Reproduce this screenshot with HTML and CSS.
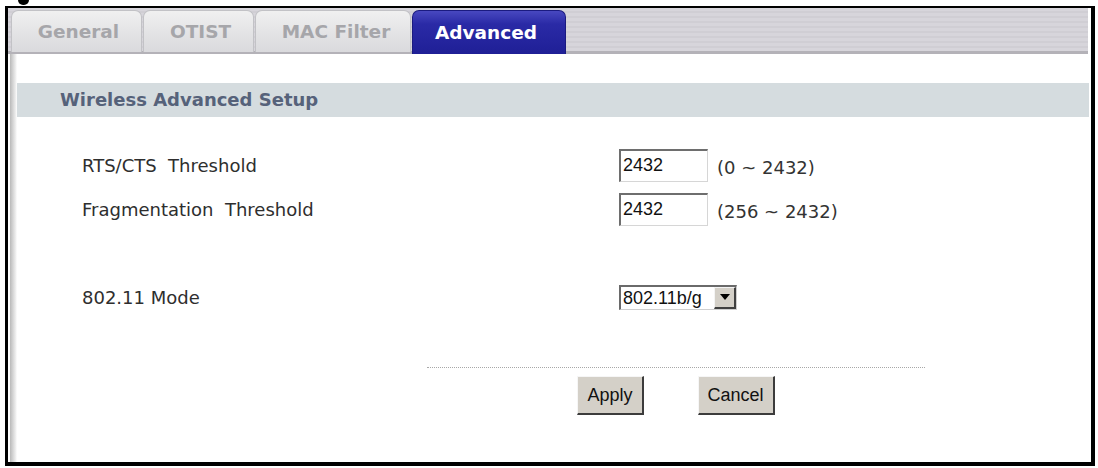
FILE: index.html
```html
<!DOCTYPE html>
<html>
<head>
<meta charset="utf-8">
<title>Wireless Advanced Setup</title>
<link rel="stylesheet" href="styles.css">
</head>
<body>
<div class="stub-row"><span class="stub"></span></div>
<div class="frame">
  <div class="tabbar">
    <div class="tab tab-general">General</div>
    <div class="tab tab-otist">OTIST</div>
    <div class="tab tab-mac">MAC Filter</div>
    <div class="tab tab-adv active">Advanced</div>
  </div>
  <div class="content">
    <div class="section-head">Wireless Advanced Setup</div>
    <div class="rows">
      <div class="row">
        <div class="label">RTS/CTS&nbsp; Threshold</div>
        <div class="field"><input class="num" type="text" value="2432"><span class="range">(0 ~ 2432)</span></div>
      </div>
      <div class="row">
        <div class="label">Fragmentation&nbsp; Threshold</div>
        <div class="field"><input class="num" type="text" value="2432"><span class="range">(256 ~ 2432)</span></div>
      </div>
      <div class="row"></div>
      <div class="row">
        <div class="label">802.11 Mode</div>
        <div class="field">
          <div class="select"><span class="select-val">802.11b/g</span><span class="select-btn"><svg width="10" height="6" viewBox="0 0 10 6"><path d="M0 0H10L5 6Z" fill="#000"/></svg></span></div>
        </div>
      </div>
    </div>
    <div class="actions">
      <div class="dots"></div>
      <div class="buttons">
        <button class="btn">Apply</button>
        <button class="btn">Cancel</button>
      </div>
    </div>
  </div>
</div>
</body>
</html>
```

FILE: styles.css
```css
html, body {
  margin: 0;
  padding: 0;
  background: #fff;
}
body {
  width: 1098px;
  height: 468px;
  overflow: hidden;
}
.stub-row {
  height: 6px;
  padding-left: 18px;
}
.stub {
  display: block;
  width: 11px;
  height: 5px;
  background: #000;
  border-radius: 0 0 6px 6px;
}
.frame {
  width: 1090px;
  height: 460px;
  margin-left: 5px;
  box-sizing: border-box;
  border-style: solid;
  border-color: #000;
  border-width: 2px 4px 4px 3px;
  display: flex;
  flex-direction: column;
  background: #fff;
}
.tabbar {
  height: 46px;
  box-sizing: border-box;
  margin-right: 3px;
  padding-left: 3px;
  padding-top: 2px;
  display: flex;
  align-items: stretch;
  background: repeating-linear-gradient(to bottom, #d7d5db 0 3px, #d0ced4 3px 5px);
  border-bottom: 3px solid #b4b2b8;
}
.tab {
  box-sizing: border-box;
  display: flex;
  align-items: center;
  justify-content: center;
  font-family: "DejaVu Sans", Verdana, sans-serif;
  font-weight: bold;
  font-size: 18.5px;
  color: #a6a6aa;
  background: linear-gradient(to bottom, #f0f0f0, #e2e2e4 60%, #dadadd);
  border: 1px solid #c2c2c6;
  border-bottom: none;
  border-radius: 7px 7px 0 0;
  margin-right: 1px;
  margin-bottom: -1px;
}
.tab-general { width: 131px; padding-left: 4px; }
.tab-otist { width: 111px; padding-left: 4px; }
.tab-mac { width: 156px; padding-left: 6px; }
.tab-adv { width: 154px; padding-right: 6px; }
.tab.active {
  color: #fff;
  background: linear-gradient(to bottom, #4848c0, #2a2aa6 30%, #1f1f96);
  border-color: #1a1a80;
  margin-bottom: -3px;
}
.content {
  flex: 1;
  padding: 29px 2px 0 9px;
  background:
    linear-gradient(to right, #fff 0 2px, #b9b9b9 2px, #d6d6d6 5px, #f2f2f2 8px, #fff 9px) left top / 9px 100% no-repeat,
    #fff;
}
.section-head {
  height: 34px;
  line-height: 34px;
  padding-left: 43px;
  background: #d5dcdf;
  font-family: "DejaVu Sans", Verdana, sans-serif;
  font-weight: bold;
  font-size: 18px;
  color: #56627a;
}
.rows {
  margin-top: 26px;
  padding-left: 65px;
}
.row {
  height: 44px;
  display: flex;
  align-items: center;
}
.label {
  width: 537px;
  font-family: "DejaVu Sans", Verdana, sans-serif;
  font-size: 18px;
  color: #2e2e2e;
}
.field {
  display: flex;
  align-items: center;
}
.num {
  width: 89px;
  height: 33px;
  box-sizing: border-box;
  margin: 0;
  padding: 0 2px;
  border-style: solid;
  border-width: 2px 1px 1px 2px;
  border-color: #6e6e6e #d6d6d6 #d6d6d6 #6e6e6e;
  font-family: "Liberation Sans", Arial, sans-serif;
  font-size: 18px;
  color: #111;
  outline: none;
}
.range {
  margin-left: 9px;
  padding-top: 4px;
  font-family: "DejaVu Sans", Verdana, sans-serif;
  font-size: 18px;
  color: #333;
}
.select {
  width: 118px;
  height: 25px;
  box-sizing: border-box;
  border-style: solid;
  border-width: 2px 1px 1px 2px;
  border-color: #6a6a6a #cfcfcf #cfcfcf #6a6a6a;
  display: flex;
  align-items: stretch;
}
.select-val {
  flex: 1;
  padding-left: 2px;
  font-family: "Liberation Sans", Arial, sans-serif;
  font-size: 18px;
  line-height: 22px;
  color: #111;
}
.select-btn {
  width: 22px;
  box-sizing: border-box;
  background: #d4d0c8;
  border-style: solid;
  border-width: 1px 2px 2px 1px;
  border-color: #f4f4f4 #404040 #404040 #f4f4f4;
  display: flex;
  align-items: center;
  justify-content: center;
}
.actions {
  margin-top: 48px;
  margin-left: 410px;
  width: 498px;
}
.dots {
  height: 0;
  border-top: 1px dotted #a8a8a8;
}
.buttons {
  margin-top: 8px;
  display: flex;
  justify-content: center;
  gap: 54px;
}
.btn {
  height: 39px;
  margin: 0;
  padding: 0 9px;
  box-sizing: border-box;
  background: #d4d0c8;
  border-style: solid;
  border-width: 1px 2px 2px 1px;
  border-color: #f6f6f6 #3c3c3c #3c3c3c #f6f6f6;
  font-family: "Liberation Sans", Arial, sans-serif;
  font-size: 18px;
  color: #111;
}
```
